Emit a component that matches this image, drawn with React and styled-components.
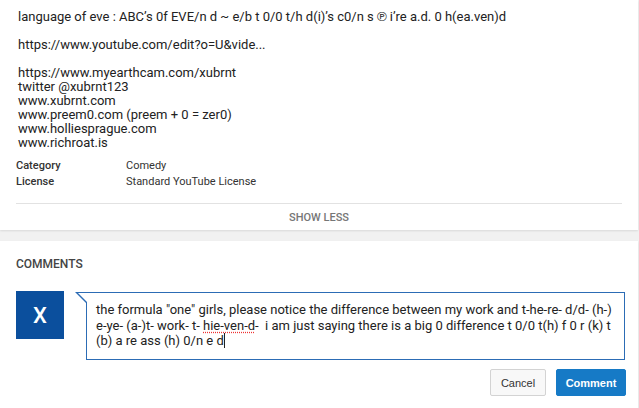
import React from "react";
import styled, { createGlobalStyle } from "styled-components";

const GlobalStyle = createGlobalStyle`
  * {
    box-sizing: border-box;
  }
  body {
    margin: 0;
    background: #f1f1f1;
    font-family: Roboto, "Liberation Sans", Arial, sans-serif;
    color: #222;
  }
`;

const links = [
  "https://www.myearthcam.com/xubrnt",
  "twitter @xubrnt123",
  "www.xubrnt.com",
  "www.preem0.com (preem + 0 = zer0)",
  "www.holliesprague.com",
  "www.richroat.is",
];

const meta = [
  { label: "Category", value: "Comedy" },
  { label: "License", value: "Standard YouTube License" },
];

function App() {
  return (
    <>
      <GlobalStyle />
      <Page>
        <InfoCard>
          <Description>
            <Line>
              language of eve : ABC’s 0f EVE/n d ~ e/b t 0/0 t/h d(i)’s c0/n s ℗ i’re a.d. 0 h(ea.ven)d
            </Line>
            <Spacer />
            <Line>https://www.youtube.com/edit?o=U&amp;vide...</Line>
            <Spacer />
            {links.map((l) => (
              <Line key={l}>{l}</Line>
            ))}
          </Description>
          <MetaList>
            {meta.map((m) => (
              <MetaRow key={m.label}>
                <MetaLabel>{m.label}</MetaLabel>
                <MetaValue>{m.value}</MetaValue>
              </MetaRow>
            ))}
          </MetaList>
          <ShowLess type="button">Show less</ShowLess>
        </InfoCard>

        <CommentsCard>
          <Heading>Comments</Heading>
          <Composer>
            <Avatar>X</Avatar>
            <Bubble>
              the formula "one" girls, please notice the difference between my work and t-he-re- d/d- (h-)
              e-ye- (a-)t- work- t- <Misspelt>hie-ven-d</Misspelt>-&nbsp; i am just saying there is a big 0
              difference t 0/0 t(h) f 0 r (k) t (b) a re ass (h) 0/n e d
              <Caret />
            </Bubble>
          </Composer>
          <Actions>
            <Button type="button">Cancel</Button>
            <Button type="button" $primary>
              Comment
            </Button>
          </Actions>
        </CommentsCard>
      </Page>
    </>
  );
}

const Page = styled.div`
  display: flex;
  flex-direction: column;
  gap: 11px;
  width: 638px;
`;

const InfoCard = styled.section`
  background: #fff;
  box-shadow: 0 1px 2px rgba(0, 0, 0, 0.1);
  padding-top: 10px;
`;

const Description = styled.div`
  padding: 0 18px;
  font-size: 13px;
  line-height: 14px;
  color: #222;
`;

const Line = styled.div`
  white-space: nowrap;
`;

const Spacer = styled.div`
  height: 14px;
`;

const MetaList = styled.div`
  margin-top: 8px;
  padding: 0 16px;
  display: flex;
  flex-direction: column;
`;

const MetaRow = styled.div`
  display: grid;
  grid-template-columns: 110px 1fr;
  font-size: 11px;
  line-height: 16px;
  color: #333;
`;

const MetaLabel = styled.span`
  font-weight: 500;
`;

const MetaValue = styled.span``;

const ShowLess = styled.button`
  display: block;
  width: calc(100% - 32px);
  margin: 13px 16px 0;
  height: 27px;
  border: none;
  border-top: 1px solid #e2e2e2;
  background: transparent;
  font-family: Roboto, sans-serif;
  font-size: 11px;
  font-weight: 500;
  text-transform: uppercase;
  color: #767676;
  padding: 0;
`;

const CommentsCard = styled.section`
  background: #fff;
  box-shadow: 0 1px 2px rgba(0, 0, 0, 0.1);
  padding: 15px 12px 20px 16px;
  min-height: 170px;
`;

const Heading = styled.h2`
  margin: 0;
  font-size: 12px;
  font-weight: 500;
  line-height: 16px;
  text-transform: uppercase;
  color: #444;
`;

const Composer = styled.div`
  display: flex;
  align-items: flex-start;
  gap: 22px;
  margin-top: 20px;
`;

const Avatar = styled.div`
  flex: 0 0 48px;
  height: 48px;
  background: #0b4f9d;
  color: #fff;
  display: flex;
  align-items: center;
  justify-content: center;
  font-size: 22px;
  font-weight: 500;
  margin-top: -1px;
`;

const Bubble = styled.div`
  position: relative;
  flex: 0 0 539px;
  width: 539px;
  min-height: 68px;
  border: 1px solid #2c6cb5;
  padding: 9px 7px 4px 9px;
  font-size: 13px;
  line-height: 15.5px;
  color: #222;
  background: #fff;

  &::before {
    content: "";
    position: absolute;
    top: -1px;
    left: -12px;
    width: 0;
    height: 0;
    border-top: 11px solid #2c6cb5;
    border-left: 11px solid transparent;
  }

  &::after {
    content: "";
    position: absolute;
    top: 0;
    left: -9px;
    width: 0;
    height: 0;
    border-top: 9px solid #fff;
    border-left: 9px solid transparent;
  }
`;

const Misspelt = styled.span`
  text-decoration: underline dotted #e33;
  text-underline-offset: 2px;
`;

const Caret = styled.span`
  display: inline-block;
  width: 1px;
  height: 15px;
  background: #222;
  vertical-align: -3px;
`;

const Actions = styled.div`
  display: flex;
  justify-content: flex-end;
  gap: 10px;
  margin-top: 9px;
`;

const Button = styled.button`
  height: 27px;
  width: ${(p) => (p.$primary ? "70px" : "56px")};
  padding: 0;
  border-radius: 2px;
  border: 1px solid ${(p) => (p.$primary ? "#167ac6" : "#d3d3d3")};
  background: ${(p) => (p.$primary ? "#167ac6" : "#f8f8f8")};
  color: ${(p) => (p.$primary ? "#fff" : "#333")};
  font-family: "Liberation Sans", Arial, sans-serif;
  font-size: 11px;
  font-weight: ${(p) => (p.$primary ? "bold" : "normal")};
`;

export default App;
